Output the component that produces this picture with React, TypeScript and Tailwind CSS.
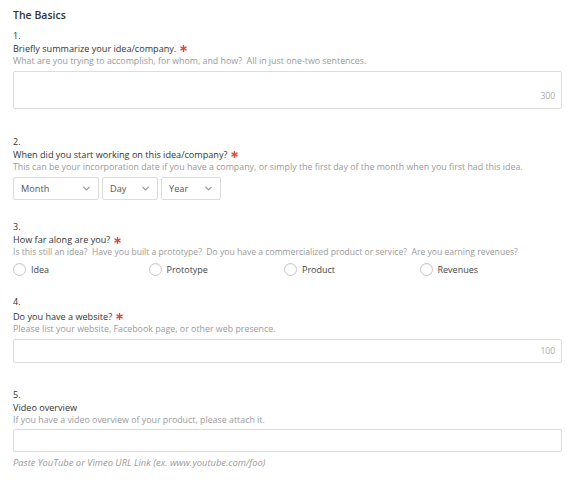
import { ChevronDown } from "lucide-react";

const font = { fontFamily: '"Open Sans", "Liberation Sans", sans-serif' };

function Req() {
  return (
    <svg viewBox="0 0 12 12" className="ml-[4px] inline-block h-[7px] w-[7px] align-[-0.5px] text-[#e8463a]">
      <g stroke="currentColor" strokeWidth="2.4" strokeLinecap="round">
        <line x1="6" y1="1" x2="6" y2="11" />
        <line x1="1.7" y1="3.5" x2="10.3" y2="8.5" />
        <line x1="1.7" y1="8.5" x2="10.3" y2="3.5" />
      </g>
    </svg>
  );
}

function Question({
  num,
  label,
  help,
  required,
  className = "",
  labelClass = "",
  helpClass = "text-[8.85px]",
}: {
  num: string;
  label: string;
  help: string;
  required?: boolean;
  className?: string;
  labelClass?: string;
  helpClass?: string;
}) {
  return (
    <div className={className}>
      <div className="text-[9px] leading-[13px] text-[#333]">{num}</div>
      <div className={`h-[13px] text-[9.1px] leading-[13px] text-[#333] ${labelClass}`}>
        {label}
        {required && <Req />}
      </div>
      <div className={`leading-[13px] whitespace-pre text-[#9a9a9a] ${helpClass}`}>{help}</div>
    </div>
  );
}

function Select({ label, width }: { label: string; width: string }) {
  return (
    <div
      className={`flex h-[23px] items-center justify-between rounded-[2px] border border-[#dcdcdc] bg-white pl-[7px] pr-[6px] ${width}`}
    >
      <span className="text-[9.2px] text-[#555]">{label}</span>
      <ChevronDown className="h-[11px] w-[11px] text-[#999]" strokeWidth={2.75} />
    </div>
  );
}

function Radio({ label }: { label: string }) {
  return (
    <label className="flex items-center gap-[5px]">
      <span className="h-[13px] w-[13px] rounded-full border border-[#c9c9c9] bg-white shadow-[inset_0_1px_1px_rgba(0,0,0,0.06)]" />
      <span className="text-[9px] leading-[13px] text-[#444]">{label}</span>
    </label>
  );
}

export default function App() {
  return (
    <div className="min-h-[482px] w-[580px] bg-white pl-[13px]" style={font}>
      <div className="w-[549px]">
        <h2 className="pt-[8px] text-[10.5px] font-semibold leading-[15px] text-[#333]">The Basics</h2>

        <Question
          className="mt-[5.5px]"
          num="1."
          label="Briefly summarize your idea/company."
          help="What are you trying to accomplish, for whom, and how?  All in just one-two sentences."
          required
        />
        <div className="relative mt-[3.5px] h-[38px] rounded-[2px] border border-[#dcdcdc]">
          <span className="absolute bottom-[5px] right-[6px] text-[8.5px] text-[#aaa]">300</span>
        </div>

        <Question
          className="mt-[25.5px]"
          num="2."
          label="When did you start working on this idea/company?"
          help="This can be your incorporation date if you have a company, or simply the first day of the month when you first had this idea."
          required
        />
        <div className="mt-[3.5px] flex gap-[3px]">
          <Select label="Month" width="w-[86px]" />
          <Select label="Day" width="w-[56px]" />
          <Select label="Year" width="w-[60px]" />
        </div>

        <Question
          className="mt-[20px]"
          num="3."
          label="How far along are you?"
          help="Is this still an idea?  Have you built a prototype?  Do you have a commercialized product or service?  Are you earning revenues?"
          helpClass="text-[8.6px]"
          required
        />
        <div className="mt-[4px] grid w-[542px] grid-cols-4">
          <Radio label="Idea" />
          <Radio label="Prototype" />
          <Radio label="Product" />
          <Radio label="Revenues" />
        </div>

        <Question
          className="mt-[18.5px]"
          labelClass="mt-[2px]"
          num="4."
          label="Do you have a website?"
          help="Please list your website, Facebook page, or other web presence."
          required
        />
        <div className="relative mt-[3px] h-[24px] rounded-[2px] border border-[#dcdcdc]">
          <span className="absolute right-[6px] top-1/2 -translate-y-1/2 text-[8.5px] text-[#aaa]">100</span>
        </div>

        <Question
          className="mt-[25px]"
          num="5."
          label="Video overview"
          help="If you have a video overview of your product, please attach it."
        />
        <div className="mt-[2px] h-[23px] rounded-[2px] border border-[#dcdcdc]" />
        <p className="mt-[4.5px] text-[9.4px] italic leading-[13px] text-[#9a9a9a]">
          Paste YouTube or Vimeo URL Link (ex. www.youtube.com/foo)
        </p>
      </div>
    </div>
  );
}
